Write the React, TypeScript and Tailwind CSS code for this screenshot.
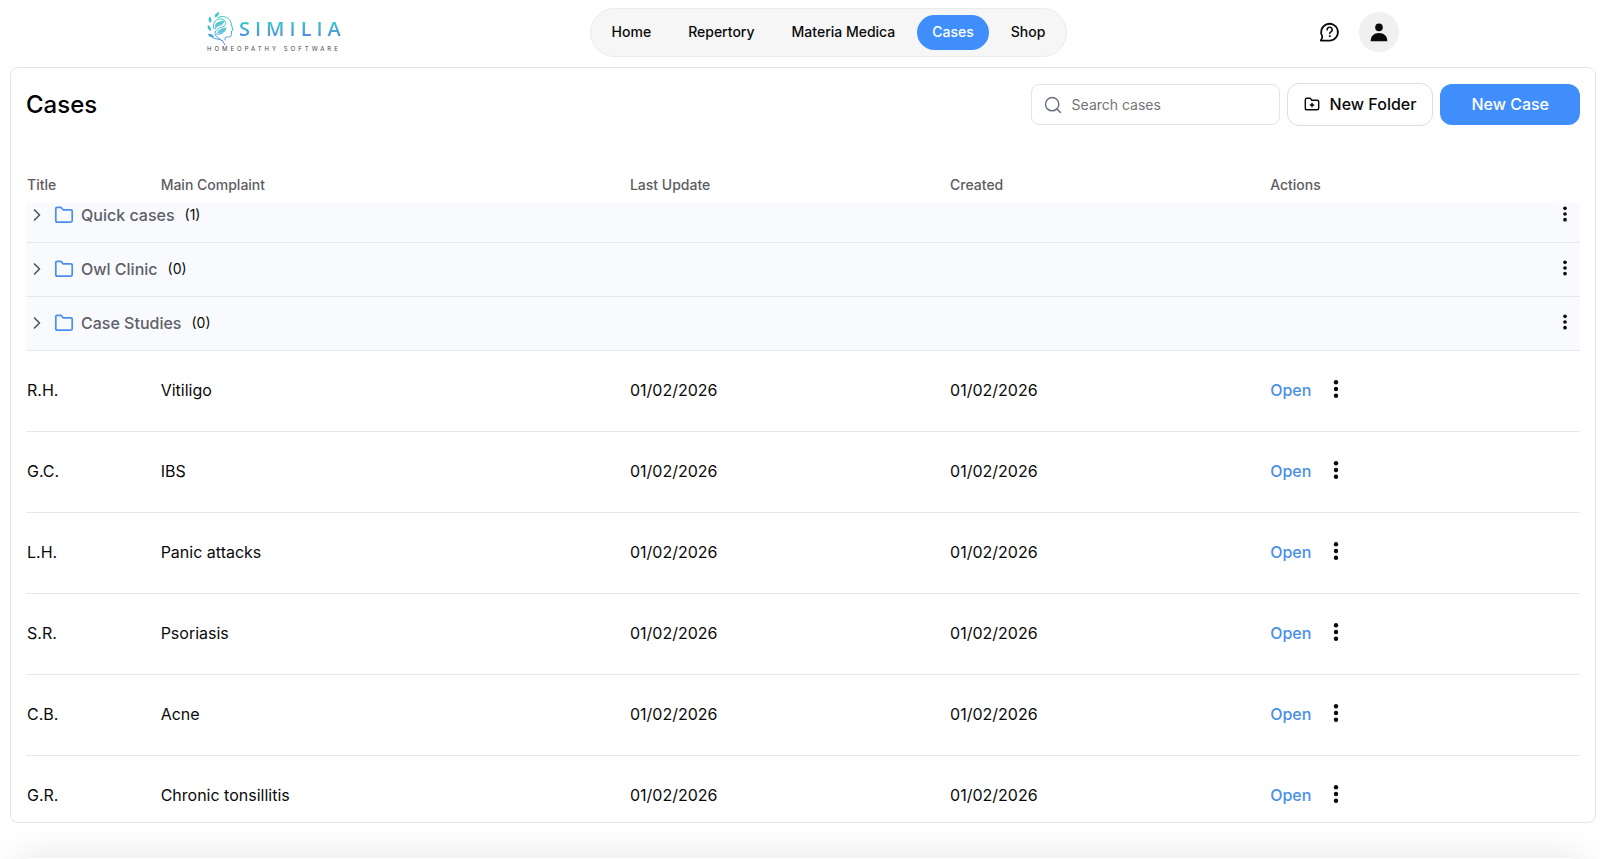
import { useLayoutEffect, useRef, useState } from "react";
import { ChevronRight, Search } from "lucide-react";
import clsx from "clsx";

const NAV_ITEMS = ["Home", "Repertory", "Materia Medica", "Cases", "Shop"];

const FOLDERS = [
	{ name: "Quick cases", count: 1 },
	{ name: "Owl Clinic", count: 0 },
	{ name: "Case Studies", count: 0 },
];

const CASES = [
	{ title: "R.H.", complaint: "Vitiligo", updated: "01/02/2026", created: "01/02/2026" },
	{ title: "G.C.", complaint: "IBS", updated: "01/02/2026", created: "01/02/2026" },
	{ title: "L.H.", complaint: "Panic attacks", updated: "01/02/2026", created: "01/02/2026" },
	{ title: "S.R.", complaint: "Psoriasis", updated: "01/02/2026", created: "01/02/2026" },
	{ title: "C.B.", complaint: "Acne", updated: "01/02/2026", created: "01/02/2026" },
	{ title: "G.R.", complaint: "Chronic tonsillitis", updated: "01/02/2026", created: "01/02/2026" },
];

const Kebab = ({ className }: { className: string }) => (
	<svg viewBox="0 0 24 24" fill="currentColor" className={className} aria-hidden="true">
		<circle cx="12" cy="5.2" r="2.2" />
		<circle cx="12" cy="12" r="2.2" />
		<circle cx="12" cy="18.8" r="2.2" />
	</svg>
);

const FolderIcon = () => (
	<svg
		viewBox="0 0 20 20"
		fill="none"
		stroke="currentColor"
		strokeWidth="1.7"
		strokeLinejoin="round"
		className="h-5 w-5 text-[#4a90e8]"
		aria-hidden="true"
	>
		<path d="M1.8 15.8V3.6Q1.8 2.3 3.1 2.3H7L9 4.8H16.9Q18.2 4.8 18.2 6.1V15.8Q18.2 17.1 16.9 17.1H3.1Q1.8 17.1 1.8 15.8Z" />
	</svg>
);

const FolderAddIcon = () => (
	<svg
		viewBox="0 0 16 16"
		fill="none"
		stroke="currentColor"
		strokeWidth="1.4"
		strokeLinejoin="round"
		className="h-4 w-4"
		aria-hidden="true"
	>
		<path d="M1.3 12.3V3.7Q1.3 2.2 2.8 2.2H6.2L7.8 4.2H13.2Q14.7 4.2 14.7 5.7V12.3Q14.7 13.8 13.2 13.8H2.8Q1.3 13.8 1.3 12.3Z" />
		<path d="M8 6.8V11.2M5.8 9H10.2" />
	</svg>
);

const HelpIcon = () => (
	<svg
		viewBox="0 0 24 24"
		fill="none"
		stroke="currentColor"
		strokeWidth="1.8"
		strokeLinecap="round"
		strokeLinejoin="round"
		className="h-6 w-6"
		aria-hidden="true"
	>
		<path d="M3.8 20.6H13A8.4 8.4 0 1 0 5.2 16.4C5.6 17.6 4.8 19 3.8 20.6Z" />
		<path d="M10.2 9.9A2.5 2.5 0 1 1 13.9 11.9Q12.8 12.5 12.7 13.4" strokeWidth="1.5" />
		<circle cx="12.7" cy="16.1" r="0.6" fill="currentColor" strokeWidth="0.8" />
	</svg>
);

const UserIcon = () => (
	<svg viewBox="0 0 24 24" fill="currentColor" className="h-6 w-6" aria-hidden="true">
		<circle cx="12" cy="7.4" r="3.8" />
		<path d="M3.7 20.8C3.7 16 7 12.9 12 12.9S20.3 16 20.3 20.8Q20.3 21.3 19.8 21.3H4.2Q3.7 21.3 3.7 20.8Z" />
	</svg>
);

const Logo = () => (
	<a href="#" className="flex w-[133px] flex-col" aria-label="Similia home">
		<span className="flex items-center gap-1">
			<svg viewBox="0 0 28 34" fill="none" className="h-[34px] w-7 shrink-0" aria-hidden="true">
				<defs>
					<linearGradient id="emblem" x1="0" y1="0" x2="0" y2="34" gradientUnits="userSpaceOnUse">
						<stop offset="0" stopColor="#35cfc4" />
						<stop offset="0.6" stopColor="#41b4d6" />
						<stop offset="1" stopColor="#6a7fdc" />
					</linearGradient>
				</defs>
				<g stroke="url(#emblem)" strokeWidth="1" strokeLinecap="round">
					{/* face profile */}
					<path d="M11 5.500C17 2.500 24 6 24.500 13L26 18L24.500 19V22.500Q24.500 25 21.500 25H19Q17.500 25.500 18 28" />
					{/* vines and neck */}
					<path d="M7 17C5 11 9 6 15 7C20 9 20 14 15 15C10 16 6 21 9 24C12 27 15 27 18 33" />
					<path d="M9 22C13 23 18 21 19 16M17 9C15 11 13 12 10 12M5 25C8 28 12 26 16 29" />
				</g>
				<g fill="url(#emblem)">
					<path d="M8 5.500Q7 1.500 12 0Q12.500 4.500 8 5.500ZM3 11Q0 7 3 4.500Q6 8 3 11ZM4 19Q-0.500 17 1 13Q4.500 15 4 19ZM7 25Q2 26 1 22Q5 21 7 25Z" />
					<path d="M8 16Q7 9 17 8.500Q17 13 12 14Q9 15 8 18ZM10 21Q12 16 19 15.500Q18 22 10 21Z" opacity="0.8" />
				</g>
			</svg>
			<span className="bg-linear-to-b from-[#2fc8c6] from-20% to-[#5590dc] to-80% bg-clip-text font-['Open_Sans'] text-[20px] leading-6 font-semibold tracking-[5px] text-transparent">
				SIMILIA
			</span>
		</span>
		<span className="text-[6px] leading-[6px] tracking-[3px] whitespace-nowrap text-[#444]">
			HOMEOPATHY SOFTWARE
		</span>
	</a>
);

const Header = () => {
	const [active, setActive] = useState("Cases");

	return (
		<header className="mx-auto mb-[3px] flex h-16 w-full max-w-[1192px] shrink-0 items-center justify-between">
			<Logo />
			<nav className="flex items-center gap-[7px] rounded-full border border-[#ebebeb] bg-[#f6f6f6] p-[6px]">
				{NAV_ITEMS.map((item) => (
					<a
						key={item}
						href="#"
						onClick={() => setActive(item)}
						className={clsx(
							"flex h-[35px] items-center rounded-full px-[15px] text-sm font-medium whitespace-nowrap",
							item === active && "bg-[#3f8efc] text-white",
						)}
					>
						{item}
					</a>
				))}
			</nav>
			<div className="flex items-center gap-[18px]">
				<button type="button" aria-label="Help">
					<HelpIcon />
				</button>
				<button
					type="button"
					aria-label="Account"
					className="flex h-10 w-10 items-center justify-center rounded-full bg-[#f0f0f0]"
				>
					<UserIcon />
				</button>
			</div>
		</header>
	);
};

const Toolbar = () => (
	<div className="flex shrink-0 items-center justify-between">
		<h1 className="text-2xl font-medium text-black">Cases</h1>
		<div className="flex items-center gap-[7px]">
			<label className="flex h-[41px] w-[249px] items-center gap-2 rounded-lg border border-[#e5e5e5] px-[11px]">
				<Search className="h-5 w-5 shrink-0 text-[#6b7280]" strokeWidth={1.75} />
				<input
					type="text"
					aria-label="Search cases"
					placeholder="Search cases"
					className="h-full w-full min-w-0 px-px text-sm outline-none placeholder:text-[#737378]"
				/>
			</label>
			<button
				type="button"
				className="flex h-[43px] items-center gap-[10px] rounded-xl border border-[#dedee2] px-4 pb-0.5 font-medium"
			>
				<FolderAddIcon />
				New Folder
			</button>
			<button
				type="button"
				className="h-[41px] rounded-xl bg-[#3f8efc] px-[31px] pb-0.5 font-medium text-white"
			>
				New Case
			</button>
		</div>
	</div>
);

const CasesTable = () => {
	const scroller = useRef<HTMLDivElement>(null);

	// the list opens slightly scrolled, under the sticky head
	useLayoutEffect(() => {
		if (scroller.current) scroller.current.scrollTop = 14;
	}, []);

	return (
		<div ref={scroller} className="mt-[41px] min-h-0 flex-1 overflow-y-auto [scrollbar-width:none]">
			<table className="w-full table-fixed border-separate border-spacing-0 text-left">
				<thead className="sticky top-0 z-10 bg-white text-sm text-[#5c5c63]">
					<tr className="h-9">
						<th className="w-[8.6%] px-px font-medium">Title</th>
						<th className="w-[30.2%] px-px font-medium">Main Complaint</th>
						<th className="w-[20.6%] px-px font-medium">Last Update</th>
						<th className="w-[20.6%] px-px font-medium">Created</th>
						<th className="px-px font-medium">Actions</th>
					</tr>
				</thead>
				<tbody>
					{FOLDERS.map((folder) => (
						<tr key={folder.name} className="h-[54px] bg-[#f8fafe]">
							<td colSpan={5} className="border-b border-[#e6e8ec] pr-[5px] pb-0.5 pl-px">
								<div className="flex items-center">
									<button type="button" aria-label={`Expand ${folder.name}`}>
										<ChevronRight className="h-5 w-5 text-[#55565c]" />
									</button>
									<span className="mx-[7px]">
										<FolderIcon />
									</span>
									<span className="font-medium text-[#5f6068]">{folder.name}</span>
									<span className="ml-[10px] text-sm">({folder.count})</span>
									<button
										type="button"
										aria-label={`${folder.name} options`}
										className="ml-auto pb-0.5"
									>
										<Kebab className="h-5 w-5" />
									</button>
								</div>
							</td>
						</tr>
					))}
					{CASES.map((item) => (
						<tr key={item.title} className="h-[81px]">
							<td className="border-b border-[#e8e8ea] px-px pb-0.5">{item.title}</td>
							<td className="border-b border-[#e8e8ea] px-px pb-0.5">{item.complaint}</td>
							<td className="border-b border-[#e8e8ea] px-px pb-0.5">{item.updated}</td>
							<td className="border-b border-[#e8e8ea] px-px pb-0.5">{item.created}</td>
							<td className="border-b border-[#e8e8ea] px-px pb-0.5">
								<div className="flex items-center gap-[13px]">
									<a href="#" className="font-medium text-[#4a8fe6]">
										Open
									</a>
									<button
										type="button"
										aria-label={`${item.title} options`}
										className="pb-0.5"
									>
										<Kebab className="h-6 w-6" />
									</button>
								</div>
							</td>
						</tr>
					))}
				</tbody>
			</table>
		</div>
	);
};

export default function App() {
	return (
		<div className="flex h-screen flex-col bg-white font-['Inter',sans-serif] text-[#0a0a0a]">
			<div className="flex min-h-0 flex-1 flex-col pr-1 pl-[10px]">
				<Header />
				<main className="flex min-h-0 flex-1 flex-col rounded-lg border border-[#e5e5e5] px-[15px] pt-[15px]">
					<Toolbar />
					<CasesTable />
				</main>
			</div>
			<footer className="flex h-9 shrink-0 items-end overflow-hidden">
				<div className="mx-7 h-px flex-1 shadow-[0_12px_36px_12px_rgba(0,0,0,0.12)]" />
			</footer>
		</div>
	);
}
